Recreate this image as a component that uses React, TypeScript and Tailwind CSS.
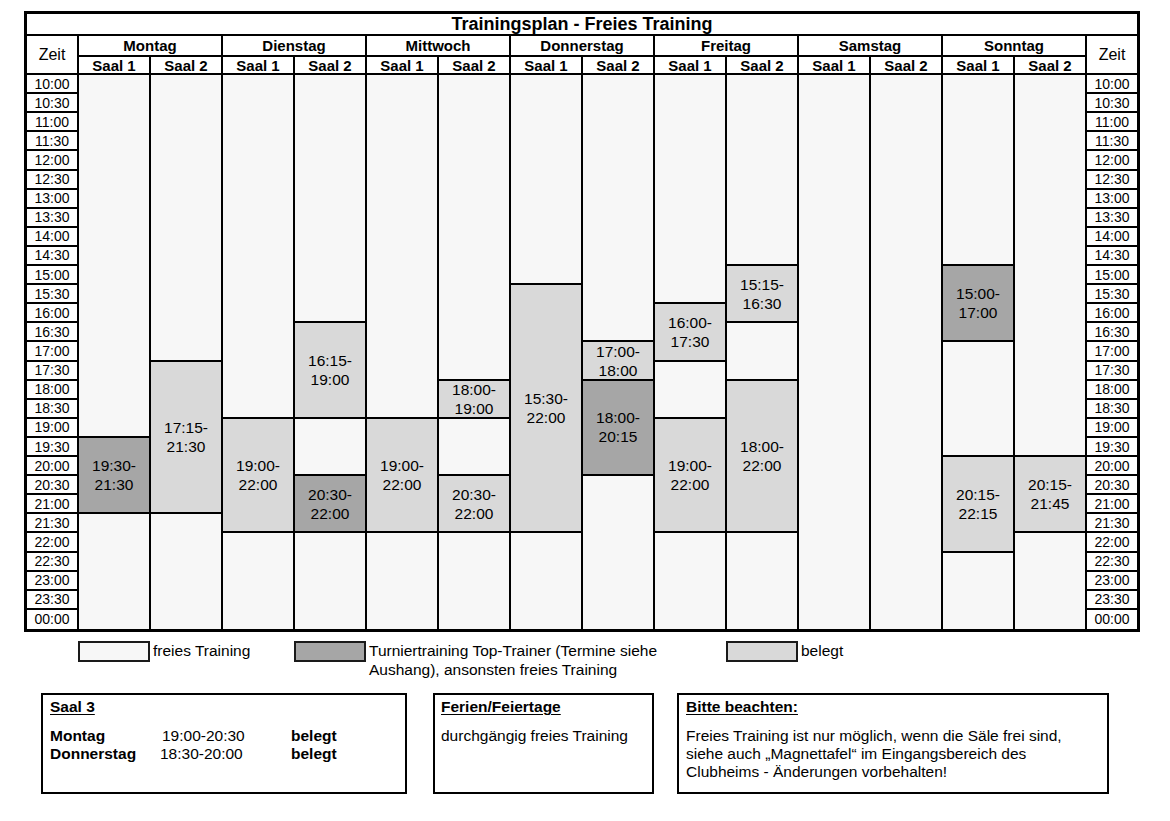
type Kind = "free" | "light" | "dark";
type Seg = { span: string; kind: Kind; label?: [string, string] };
type Day = { name: string; rooms: [Seg[], Seg[]] };

const fill: Record<Kind, string> = {
  free: "bg-[#f7f7f7]",
  light: "bg-[#d9d9d9]",
  dark: "bg-[#a6a6a6]",
};

const F = (span: string): Seg => ({ span, kind: "free" });
const L = (span: string, a: string, b: string): Seg => ({ span, kind: "light", label: [a, b] });
const D = (span: string, a: string, b: string): Seg => ({ span, kind: "dark", label: [a, b] });

// one row = 30 minutes, 10:00 bis 00:00
const days: Day[] = [
  {
    name: "Montag",
    rooms: [
      [F("row-span-19"), D("row-span-4", "19:30-", "21:30"), F("row-span-6")],
      [F("row-span-15"), L("row-span-8", "17:15-", "21:30"), F("row-span-6")],
    ],
  },
  {
    name: "Dienstag",
    rooms: [
      [F("row-span-18"), L("row-span-6", "19:00-", "22:00"), F("row-span-5")],
      [
        F("row-span-13"),
        L("row-span-5", "16:15-", "19:00"),
        F("row-span-3"),
        D("row-span-3", "20:30-", "22:00"),
        F("row-span-5"),
      ],
    ],
  },
  {
    name: "Mittwoch",
    rooms: [
      [F("row-span-18"), L("row-span-6", "19:00-", "22:00"), F("row-span-5")],
      [
        F("row-span-16"),
        L("row-span-2", "18:00-", "19:00"),
        F("row-span-3"),
        L("row-span-3", "20:30-", "22:00"),
        F("row-span-5"),
      ],
    ],
  },
  {
    name: "Donnerstag",
    rooms: [
      [F("row-span-11"), L("row-span-13", "15:30-", "22:00"), F("row-span-5")],
      [
        F("row-span-14"),
        L("row-span-2", "17:00-", "18:00"),
        D("row-span-5", "18:00-", "20:15"),
        F("row-span-8"),
      ],
    ],
  },
  {
    name: "Freitag",
    rooms: [
      [
        F("row-span-12"),
        L("row-span-3", "16:00-", "17:30"),
        F("row-span-3"),
        L("row-span-6", "19:00-", "22:00"),
        F("row-span-5"),
      ],
      [
        F("row-span-10"),
        L("row-span-3", "15:15-", "16:30"),
        F("row-span-3"),
        L("row-span-8", "18:00-", "22:00"),
        F("row-span-5"),
      ],
    ],
  },
  {
    name: "Samstag",
    rooms: [[F("row-span-29")], [F("row-span-29")]],
  },
  {
    name: "Sonntag",
    rooms: [
      [
        F("row-span-10"),
        D("row-span-4", "15:00-", "17:00"),
        F("row-span-6"),
        L("row-span-5", "20:15-", "22:15"),
        F("row-span-4"),
      ],
      [F("row-span-20"), L("row-span-4", "20:15-", "21:45"), F("row-span-5")],
    ],
  },
];

const times = Array.from({ length: 29 }, (_, i) => {
  const h = (10 + Math.floor(i / 2)) % 24;
  return `${String(h).padStart(2, "0")}:${i % 2 ? "30" : "00"}`;
});

function TimeColumn({ right }: { right?: boolean }) {
  return (
    <div className={right ? "flex w-[52px] flex-col border-l-2 border-black" : "flex w-[50px] flex-col"}>
      <div className="flex h-[39px] items-center justify-center border-b-2 border-black text-[16px] leading-none">
        Zeit
      </div>
      <div className="grid h-[554px] grid-rows-[repeat(29,minmax(0,1fr))] bg-white">
        {times.map((t) => (
          <div
            key={t}
            className="flex items-center justify-center border-b-2 border-black text-[14px] leading-none last:border-b-0"
          >
            {t}
          </div>
        ))}
      </div>
    </div>
  );
}

function Room({ segs, first }: { segs: Seg[]; first?: boolean }) {
  return (
    <div
      className={
        first
          ? "grid h-[554px] w-[72px] grid-rows-[repeat(29,minmax(0,1fr))] border-r-2 border-black"
          : "grid h-[554px] flex-1 grid-rows-[repeat(29,minmax(0,1fr))]"
      }
    >
      {segs.map((s, i) => (
        <div
          key={i}
          className={`${s.span} ${fill[s.kind]} flex flex-col items-center justify-center border-b-2 border-black text-[15.5px] leading-[19px] last:border-b-0`}
        >
          {s.label && (
            <>
              <span>{s.label[0]}</span>
              <span>{s.label[1]}</span>
            </>
          )}
        </div>
      ))}
    </div>
  );
}

function DayColumn({ day }: { day: Day }) {
  return (
    <div className="flex w-[144px] flex-col border-l-2 border-black">
      <div className="flex h-[21px] items-center justify-center border-b-2 border-black text-[15px] font-bold leading-none">
        {day.name}
      </div>
      <div className="flex h-[18px] border-b-2 border-black text-[15px] font-bold leading-none">
        <div className="flex w-[72px] items-center justify-center border-r-2 border-black">Saal 1</div>
        <div className="flex flex-1 items-center justify-center">Saal 2</div>
      </div>
      <div className="flex">
        <Room segs={day.rooms[0]} first />
        <Room segs={day.rooms[1]} />
      </div>
    </div>
  );
}

function LegendBox({ color }: { color: string }) {
  return <div className={`h-[21px] w-[72px] shrink-0 border-2 border-[#1a1a1a] ${color}`} />;
}

export default function App() {
  return (
    <div className="min-h-screen bg-white pl-[24px] pt-[11px] font-['Liberation_Sans',Arial,sans-serif] text-black">
      <div className="flex w-[1116px] flex-col border-[3px] border-black bg-white">
        <div className="flex h-[22px] items-center justify-center border-b-2 border-black text-[18px] font-bold leading-none">
          Trainingsplan - Freies Training
        </div>
        <div className="flex">
          <TimeColumn />
          {days.map((d) => (
            <DayColumn key={d.name} day={d} />
          ))}
          <TimeColumn right />
        </div>
      </div>

      <div className="ml-[54px] mt-[9px] flex h-[52px] items-start text-[15.5px] leading-[19px]">
        <div className="flex w-[216px] items-start gap-[3px]">
          <LegendBox color="bg-[#f7f7f7]" />
          <span>freies Training</span>
        </div>
        <div className="flex w-[432px] items-start gap-[3px]">
          <LegendBox color="bg-[#a6a6a6]" />
          <span>
            Turniertraining Top-Trainer (Termine siehe
            <br />
            Aushang), ansonsten freies Training
          </span>
        </div>
        <div className="flex items-start gap-[3px]">
          <LegendBox color="bg-[#d9d9d9]" />
          <span>belegt</span>
        </div>
      </div>

      <div className="ml-[17px] flex items-start text-[15.5px] leading-[18px]">
        <div className="h-[101px] w-[366px] border-2 border-black px-[7px] pt-[3px]">
          <div className="mb-[11px] font-bold underline underline-offset-2">Saal 3</div>
          <div className="flex">
            <span className="w-[112px] font-bold">Montag</span>
            <span className="w-[129px]">19:00-20:30</span>
            <span className="font-bold">belegt</span>
          </div>
          <div className="flex">
            <span className="w-[110px] font-bold">Donnerstag</span>
            <span className="w-[131px]">18:30-20:00</span>
            <span className="font-bold">belegt</span>
          </div>
        </div>

        <div className="ml-[26px] h-[101px] w-[221px] border-2 border-black px-[6px] pt-[3px]">
          <div className="mb-[11px] font-bold underline underline-offset-2">Ferien/Feiertage</div>
          <div>durchgängig freies Training</div>
        </div>

        <div className="ml-[23px] h-[101px] w-[432px] border-2 border-black px-[7px] pt-[3px]">
          <div className="mb-[11px] font-bold underline underline-offset-2">Bitte beachten:</div>
          <p>
            Freies Training ist nur möglich, wenn die Säle frei sind,
            <br />
            siehe auch „Magnettafel“ im Eingangsbereich des
            <br />
            Clubheims - Änderungen vorbehalten!
          </p>
        </div>
      </div>
    </div>
  );
}
